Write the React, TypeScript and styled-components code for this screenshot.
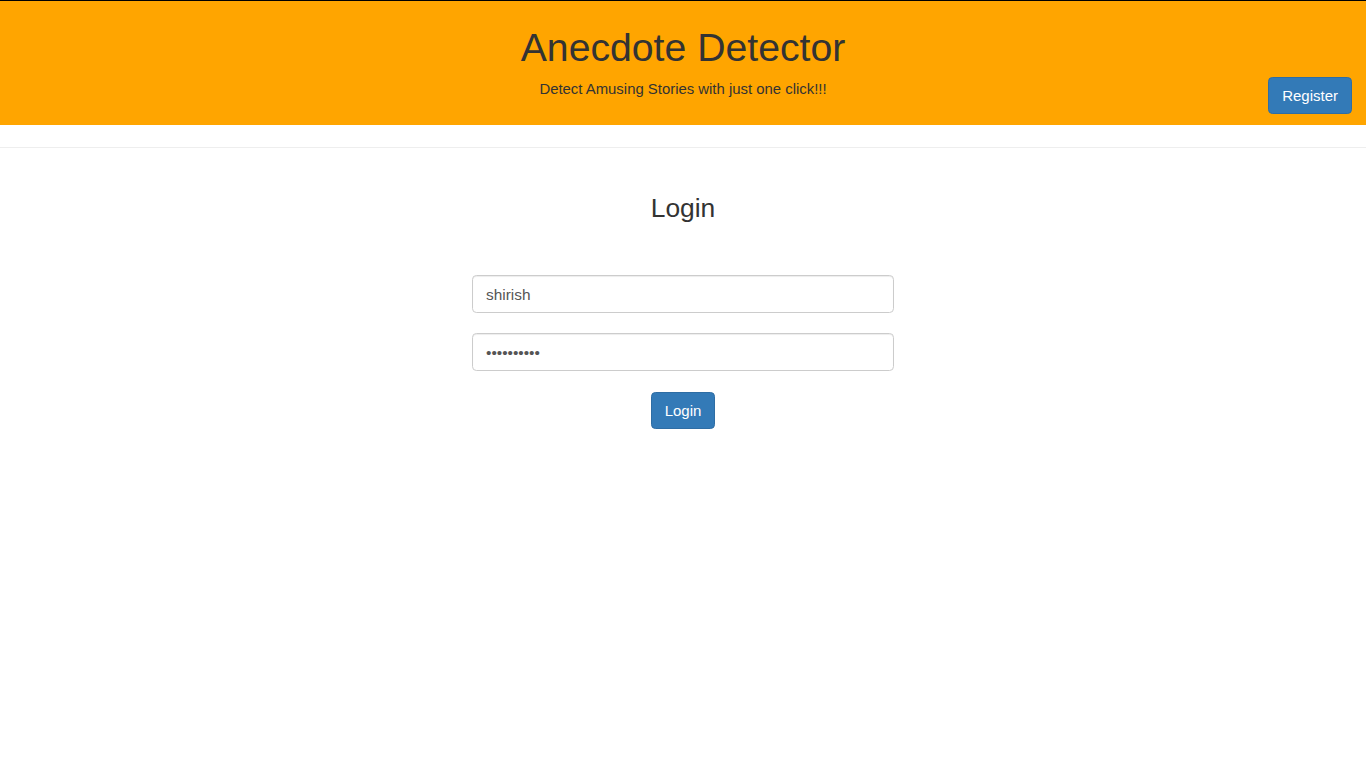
import React from "react";
import styled, { createGlobalStyle } from "styled-components";

const GlobalStyle = createGlobalStyle`
  html, body { margin: 0; padding: 0; background: #fff; }
  body {
    font-family: "Liberation Sans", Arial, Helvetica, sans-serif;
    color: #333;
    font-size: 15.4px;
    line-height: 1.42857;
  }
  * { box-sizing: border-box; }
`;

const Header = styled.header`
  background: #ffa500;
  border-top: 1px solid #000;
  height: 125px;
  display: grid;
  grid-template-columns: 1fr auto 1fr;
  align-items: end;
`;

const TitleBlock = styled.div`
  grid-column: 2;
  text-align: center;
  padding-top: 25px;
  padding-bottom: 25px;
  align-self: start;
`;

const Title = styled.h1`
  margin: 0 0 8px;
  font-size: 39.2px;
  font-weight: 400;
  line-height: 43.6px;
  color: #333;
`;

const Subtitle = styled.p`
  margin: 0;
  font-size: 14.9px;
  line-height: 22px;
  color: #333;
`;

const HeaderRight = styled.div`
  grid-column: 3;
  display: flex;
  justify-content: flex-end;
  padding: 0 14px 11px 0;
`;

const Button = styled.button`
  font-family: "Liberation Sans", Arial, Helvetica, sans-serif;
  font-size: 15px;
  line-height: 1.42857;
  height: 37px;
  padding: 1px 13px 0;
  color: #fff;
  background: #337ab7;
  border: 1px solid #2e6da4;
  border-radius: 4.4px;
  cursor: pointer;
`;

const Divider = styled.hr`
  margin: 22px 0 0;
  border: 0;
  border-top: 1px solid #eee;
`;

const Main = styled.main`
  display: flex;
  flex-direction: column;
  align-items: center;
`;

const FormTitle = styled.h3`
  margin: 46px 0 0;
  font-size: 26.4px;
  font-weight: 400;
  line-height: 29px;
  color: #333;
`;

const Form = styled.form`
  width: 422px;
  margin-top: 52px;
  display: flex;
  flex-direction: column;
  align-items: center;
  gap: 20px;
`;

const Input = styled.input`
  width: 100%;
  height: 38px;
  padding: 1px 13px 0;
  font-family: "Liberation Sans", Arial, Helvetica, sans-serif;
  font-size: 15.4px;
  color: #555;
  background: #fff;
  border: 1px solid #ccc;
  border-radius: 4.4px;
  box-shadow: inset 0 1px 1px rgba(0, 0, 0, 0.075);
  outline: none;
`;

const SubmitRow = styled.div`
  margin-top: 1px;
`;

export default function App() {
  return (
    <>
      <GlobalStyle />
      <Header>
        <TitleBlock>
          <Title>Anecdote Detector</Title>
          <Subtitle>Detect Amusing Stories with just one click!!!</Subtitle>
        </TitleBlock>
        <HeaderRight>
          <Button type="button">Register</Button>
        </HeaderRight>
      </Header>
      <Divider />
      <Main>
        <FormTitle>Login</FormTitle>
        <Form onSubmit={(e) => e.preventDefault()}>
          <Input type="text" defaultValue="shirish" />
          <Input type="password" defaultValue="0123456789" />
          <SubmitRow>
            <Button type="submit">Login</Button>
          </SubmitRow>
        </Form>
      </Main>
    </>
  );
}
